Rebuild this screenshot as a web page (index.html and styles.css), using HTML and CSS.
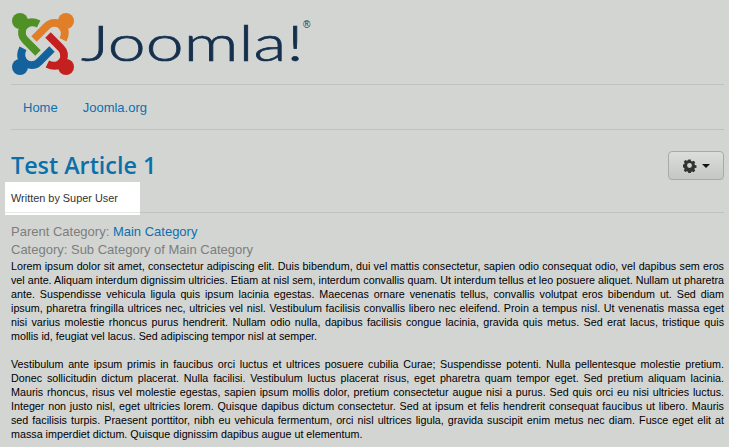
FILE: index.html
```html
<!DOCTYPE html>
<html lang="en">
<head>
<meta charset="utf-8">
<title>Test Article 1</title>
<link rel="stylesheet" href="styles.css">
</head>
<body>
<div class="page">
  <header class="brand">
    <svg class="mark" viewBox="0 0 210 210" width="70" height="70" aria-hidden="true">
      <defs>
        <path id="band" fill="none" stroke-width="23" d="M92 45 Q62 30 45 56 Q36 78 52 94 L90 132"/>
      </defs>
      <g>
        <use href="#band" stroke="#4f9126"/>
        <circle cx="36" cy="36" r="24" fill="#4f9126"/>
      </g>
      <g transform="rotate(90 105 105)">
        <use href="#band" stroke="#e07f28"/>
        <circle cx="36" cy="36" r="24" fill="#e07f28"/>
      </g>
      <g transform="rotate(180 105 105)">
        <use href="#band" stroke="#c4201f"/>
        <circle cx="36" cy="36" r="24" fill="#c4201f"/>
      </g>
      <g transform="rotate(270 105 105)">
        <use href="#band" stroke="#14629b"/>
        <circle cx="36" cy="36" r="24" fill="#14629b"/>
      </g>
    </svg>
    <span class="wordmark">Joomla!</span><sup class="reg">®</sup>
  </header>
  <nav class="nav">
    <a href="#">Home</a>
    <a href="#">Joomla.org</a>
  </nav>
  <main>
    <div class="title-row">
      <h1>Test Article 1</h1>
      <button class="tools" type="button">
        <svg viewBox="0 0 16 16" width="14" height="14" aria-hidden="true">
          <path fill="#333" fill-rule="evenodd" d="M6.5 1h3l.4 2 1.4.6 1.8-1 2 2.1-1.1 1.7.6 1.5 2 .4v2.8l-2 .4-.6 1.5 1.1 1.7-2 2-1.8-1-1.4.6-.4 1.7h-3l-.4-1.9-1.4-.6-1.8 1-2-2 1.1-1.7-.6-1.5-2-.4V7.3l2-.4.6-1.5-1.1-1.7 2-2.1 1.8 1 1.4-.6zM8 5.4a3 3 0 1 0 0 6 3 3 0 0 0 0-6z" transform="translate(0 -.4) scale(.93)"/>
        </svg>
        <span class="caret"></span>
      </button>
    </div>
    <div class="byline">Written by Super User</div>
    <div class="cats">
      <div>Parent Category: <a href="#">Main Category</a></div>
      <div>Category: Sub Category of Main Category</div>
    </div>
    <p>Lorem ipsum dolor sit amet, consectetur adipiscing elit. Duis bibendum, dui vel mattis consectetur, sapien odio consequat odio, vel dapibus sem eros vel ante. Aliquam interdum dignissim ultricies. Etiam at nisl sem, interdum convallis quam. Ut interdum tellus et leo posuere aliquet. Nullam ut pharetra ante. Suspendisse vehicula ligula quis ipsum lacinia egestas. Maecenas ornare venenatis tellus, convallis volutpat eros bibendum ut. Sed diam ipsum, pharetra fringilla ultrices nec, ultricies vel nisl. Vestibulum facilisis convallis libero nec eleifend. Proin a tempus nisl. Ut venenatis massa eget nisi varius molestie rhoncus purus hendrerit. Nullam odio nulla, dapibus facilisis congue lacinia, gravida quis metus. Sed erat lacus, tristique quis mollis id, feugiat vel lacus. Sed adipiscing tempor nisl at semper.</p>
    <p>Vestibulum ante ipsum primis in faucibus orci luctus et ultrices posuere cubilia Curae; Suspendisse potenti. Nulla pellentesque molestie pretium. Donec sollicitudin dictum placerat. Nulla facilisi. Vestibulum luctus placerat risus, eget pharetra quam tempor eget. Sed pretium aliquam lacinia. Mauris rhoncus, risus vel molestie egestas, sapien ipsum mollis dolor, pretium consectetur augue nisi a purus. Sed quis orci eu nisi ultricies luctus. Integer non justo nisl, eget ultricies lorem. Quisque dapibus dictum consectetur. Sed at ipsum et felis hendrerit consequat faucibus ut libero. Mauris sed facilisis turpis. Praesent porttitor, nibh eu vehicula fermentum, orci nisl ultrices ligula, gravida suscipit enim metus nec diam. Fusce eget elit at massa imperdiet dictum. Quisque dignissim dapibus augue ut elementum.</p>
  </main>
</div>
</body>
</html>
```
FILE: styles.css
```css
html, body { margin: 0; padding: 0; }
body {
  background: #d3d5d3;
  color: #111;
  font-family: "Liberation Sans", Arial, sans-serif;
  overflow: hidden;
}
.page { padding: 0 5px 0 11px; height: 447px; box-sizing: border-box; }
a { color: #0c70ae; text-decoration: none; }
.brand {
  display: flex;
  align-items: flex-start;
  height: 84px;
  border-bottom: 1px solid #bfc2c0;
}
.mark { flex: none; margin: 9px 0 0 -3px; }
.wordmark {
  display: block;
  flex: none;
  width: 219px;
  margin: 12px 0 0 3px;
  font-family: Lato, sans-serif;
  font-weight: 300;
  font-size: 50px;
  line-height: 60px;
  color: #15304d;
  -webkit-text-stroke: 0.7px #15304d;
  white-space: nowrap;
  transform: scaleX(1.36);
  transform-origin: left;
}
.reg {
  font-size: 10px;
  line-height: 12px;
  color: #15304d;
  margin: 19px 0 0 3px;
}
.nav {
  display: flex;
  gap: 25px;
  height: 44px;
  align-items: center;
  padding-left: 12px;
  border-bottom: 1px solid #bfc2c0;
  font-size: 13px;
}
.title-row {
  display: flex;
  justify-content: space-between;
  align-items: flex-start;
  padding-top: 21px;
  height: 31px;
}
h1 {
  margin: -1px 0 0;
  font-family: "Open Sans", sans-serif;
  font-weight: 600;
  font-size: 23.3px;
  line-height: 30px;
  color: #0a70aa;
}
.tools {
  width: 56px;
  height: 29px;
  padding: 0;
  border: 1px solid #a9aba9;
  border-radius: 4px;
  background: linear-gradient(#dcdedc, #c5c7c5);
  display: flex;
  align-items: center;
  justify-content: center;
  gap: 5px;
}
.caret {
  width: 0; height: 0;
  border: 4px solid transparent;
  border-top-color: #111;
  border-bottom: 0;
}
.byline {
  position: relative;
  margin-left: -6px;
  width: 135px;
  height: 30px;
  padding-left: 6px;
  box-sizing: border-box;
  background: #fff;
  font-size: 10.9px;
  line-height: 33px;
  color: #333;
  white-space: nowrap;
}
.byline::after {
  content: "";
  position: absolute;
  left: 0;
  top: 30px;
  width: 100%;
  height: 3px;
  background: linear-gradient(#e6e6e6 1px, #fff 1px);
}
.cats {
  border-top: 1px solid #bfc2c0;
  padding-top: 10px;
  font-size: 13px;
  line-height: 18px;
  color: #7c7e7e;
}
p {
  margin: 0 0 14px;
  font-size: 10.74px;
  line-height: 14px;
  text-align: justify;
  color: #000;
}
```
